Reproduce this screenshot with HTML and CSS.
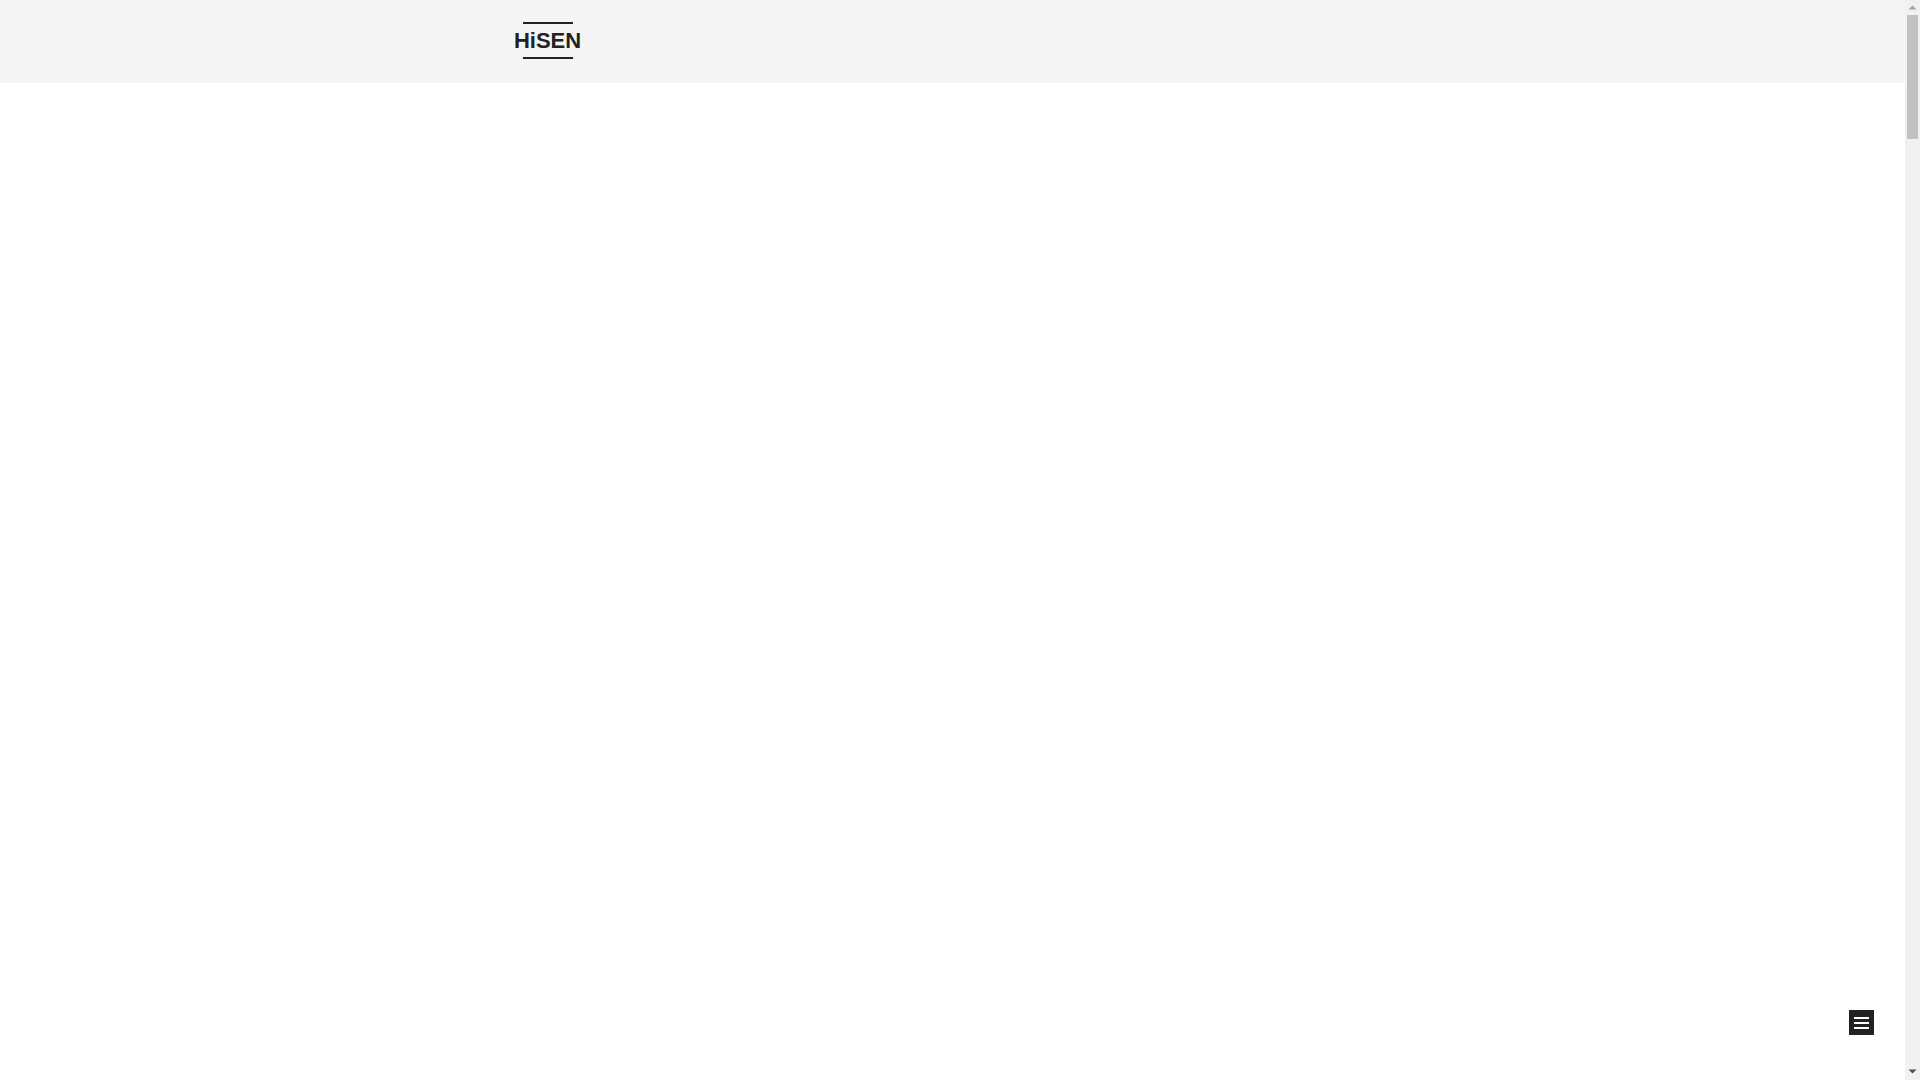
FILE: index.html
```html
<!DOCTYPE html>
<html lang="en">
<head>
<meta charset="utf-8">
<title>HiSEN</title>
<link rel="stylesheet" href="styles.css">
</head>
<body>
<div class="page">
  <header class="site-header">
    <a class="logo" href="#">
      <span class="logo-line"></span>
      <span class="logo-text">HiSEN</span>
      <span class="logo-line"></span>
    </a>
  </header>
  <main class="content"></main>
</div>
<div class="scrollbar" aria-hidden="true">
  <div class="sb-button">
    <svg width="15" height="15" viewBox="0 0 15 15"><polygon points="3.5,9.5 11.5,9.5 7.5,5.5" fill="#a3a3a3"/></svg>
  </div>
  <div class="sb-track">
    <div class="sb-thumb"></div>
  </div>
  <div class="sb-button">
    <svg width="15" height="15" viewBox="0 0 15 15"><polygon points="3.5,4.5 11.5,4.5 7.5,8.5" fill="#505050"/></svg>
  </div>
</div>
<button class="menu-toggle" aria-label="Menu">
  <span class="bar"></span>
  <span class="bar"></span>
  <span class="bar"></span>
</button>
</body>
</html>
```

FILE: styles.css
```css
html, body {
  margin: 0;
  padding: 0;
  height: 100%;
  overflow: hidden;
}
body {
  font-family: "Liberation Sans", Arial, sans-serif;
  background: #fff;
  color: #222;
  display: flex;
}
.page {
  flex: 1;
  min-width: 0;
  height: 100vh;
  overflow: hidden;
}
.scrollbar {
  width: 15px;
  flex: none;
  height: 100vh;
  background: #f1f1f1;
  display: flex;
  flex-direction: column;
}
.sb-button {
  height: 15px;
  flex: none;
}
.sb-button svg {
  display: block;
}
.sb-track {
  flex: 1;
  padding: 0 2px;
}
.sb-thumb {
  height: 124px;
  background: #c1c1c1;
}
.site-header {
  height: 83px;
  background: #f5f5f5;
  display: flex;
  align-items: flex-start;
  padding-left: 514px;
  box-sizing: border-box;
}
.logo {
  display: flex;
  flex-direction: column;
  align-items: center;
  text-decoration: none;
  color: #222;
  padding-top: 22px;
  width: 67px;
}
.logo-line {
  display: block;
  width: 50px;
  height: 2px;
  background: #222;
}
.logo-text {
  display: block;
  font-size: 22px;
  font-weight: bold;
  line-height: 21px;
  margin: 6px 0;
  white-space: nowrap;
}
.content {
  height: 997px;
}
.menu-toggle {
  position: fixed;
  right: 46px;
  bottom: 45px;
  width: 25px;
  height: 25px;
  padding: 0;
  border: 0;
  background: #222;
  display: flex;
  flex-direction: column;
  align-items: center;
  justify-content: center;
  gap: 3px;
  cursor: pointer;
}
.menu-toggle .bar {
  display: block;
  width: 15px;
  height: 2px;
  background: #fff;
}
```
